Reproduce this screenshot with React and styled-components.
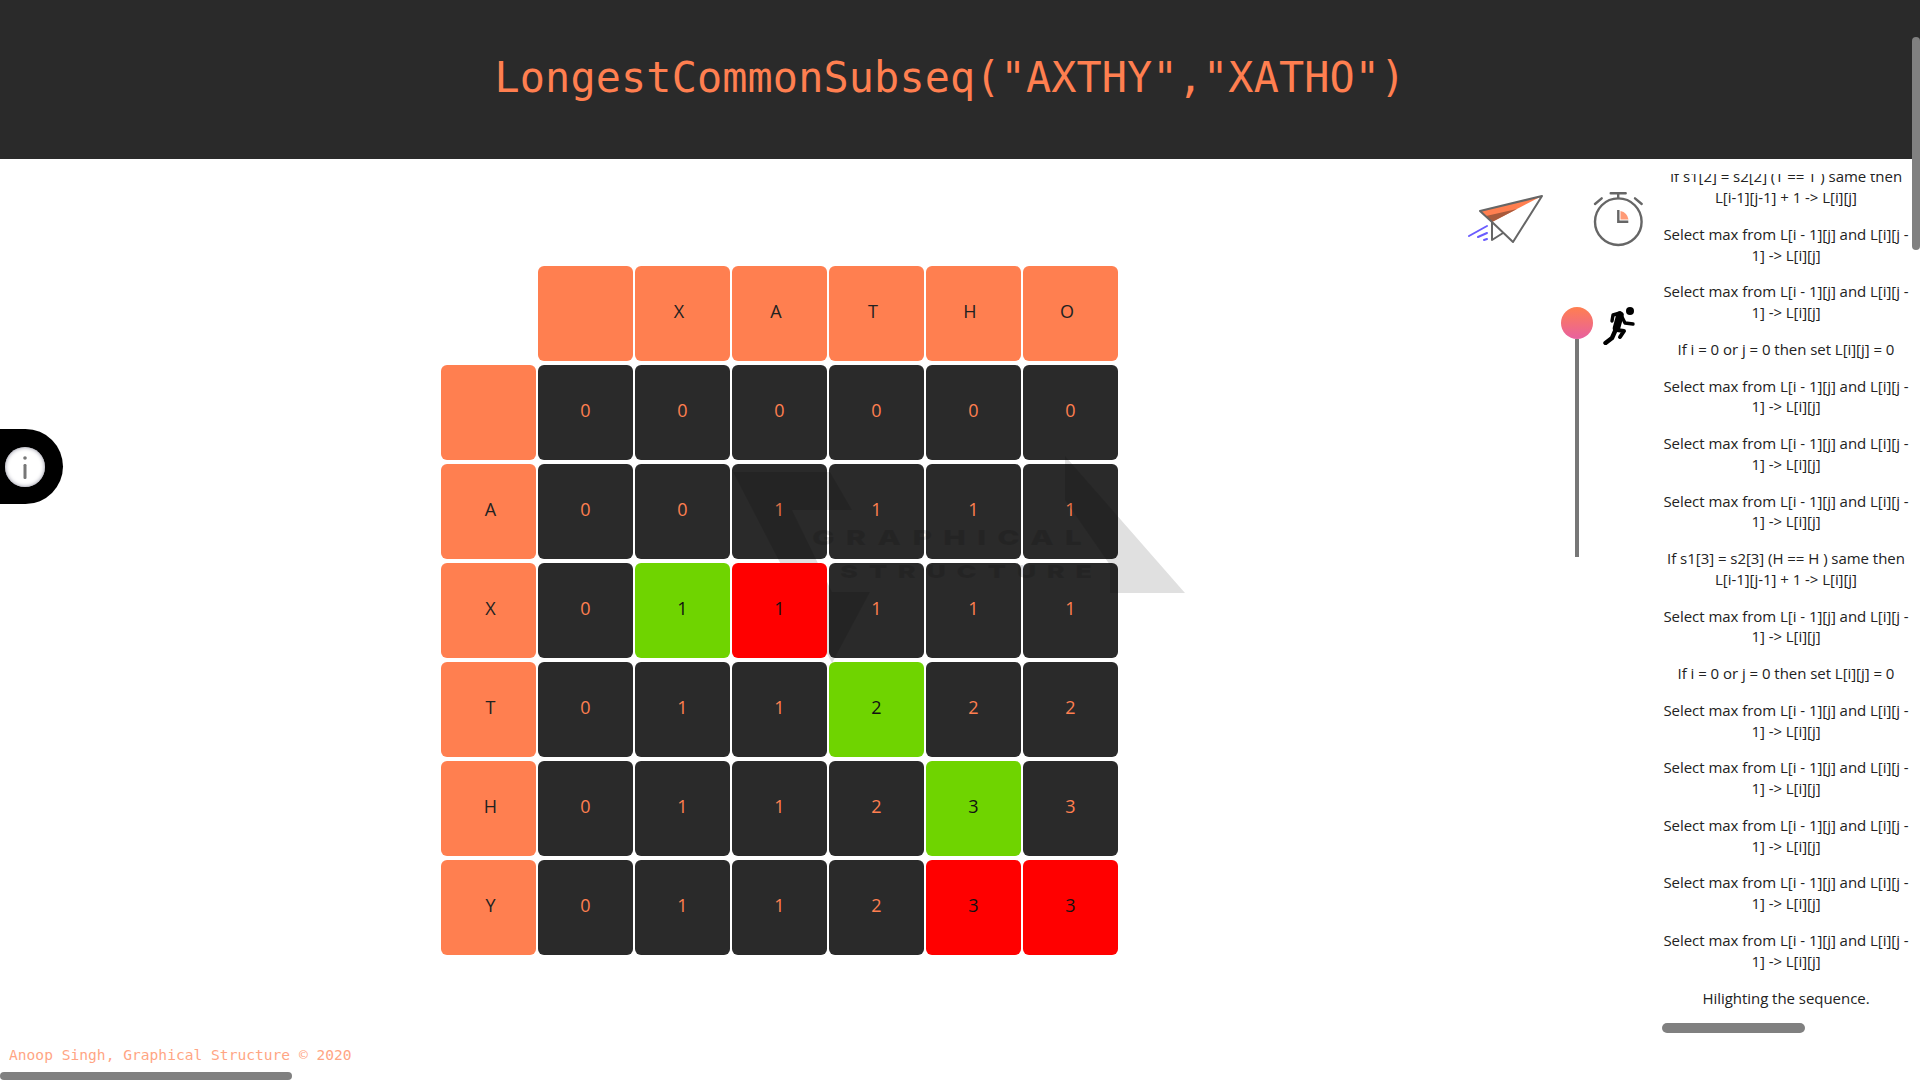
import React from 'react'
import styled, { createGlobalStyle } from 'styled-components'

const CORAL = '#ff7f50'
const DARK = '#2a2a2a'

const GlobalStyle = createGlobalStyle`
  html, body { margin: 0; padding: 0; background: #fff; overflow: hidden; }
  body { font-family: "Open Sans", "Liberation Sans", sans-serif; }
`

const columns = ['', 'X', 'A', 'T', 'H', 'O']
const rows = [
  { label: '', cells: ['0', '0', '0', '0', '0', '0'] },
  { label: 'A', cells: ['0', '0', '1', '1', '1', '1'] },
  { label: 'X', cells: ['0', '1g', '1r', '1', '1', '1'] },
  { label: 'T', cells: ['0', '1', '1', '2g', '2', '2'] },
  { label: 'H', cells: ['0', '1', '1', '2', '3g', '3'] },
  { label: 'Y', cells: ['0', '1', '1', '2', '3r', '3r'] },
]

const MAX = 'Select max from L[i - 1][j] and L[i][j - 1] -> L[i][j]'
const ZERO = 'If i = 0 or j = 0 then set L[i][j] = 0'
const log = [
  'If s1[2] = s2[2] (T == T ) same then L[i-1][j-1] + 1 -> L[i][j]',
  MAX, MAX, ZERO, MAX, MAX, MAX,
  'If s1[3] = s2[3] (H == H ) same then L[i-1][j-1] + 1 -> L[i][j]',
  MAX, ZERO, MAX, MAX, MAX, MAX, MAX,
  'Hilighting the sequence.',
]

function PlaneIcon() {
  return (
    <svg width="82" height="58" viewBox="0 0 82 58" fill="none">
      <polygon points="15,21 77,6 27,32" fill={CORAL} />
      <polygon points="21,26 27,32 52,19" fill="#a85a3c" />
      <path d="M77 6 L15 21 L27 32 L48 52 Z" stroke="#666" strokeWidth="2" strokeLinejoin="round" />
      <path d="M27 32 L27 50 L38 43" stroke="#666" strokeWidth="2" strokeLinejoin="round" />
      <path d="M4 46 L22 36 M13 47 L22 43 M19 50 L22 49" stroke="#6a5cff" strokeWidth="2" strokeLinecap="round" />
    </svg>
  )
}

function WatchIcon() {
  return (
    <svg width="56" height="60" viewBox="0 0 56 60" fill="none">
      <path d="M30.5 21 A10.5 10.5 0 0 1 38.5 29.5 L30.5 29.5 Z" fill="#ff9a76" />
      <circle cx="28.3" cy="31.7" r="23.3" stroke="#666" strokeWidth="2.4" />
      <path d="M20.7 3.3 H35.7 M28.2 3.3 V8" stroke="#666" strokeWidth="2.4" strokeLinecap="round" />
      <path d="M5 14 L11.7 8.3 M45 8.3 L51.7 14" stroke="#666" strokeWidth="2.4" strokeLinecap="round" />
      <path d="M28.3 20 V31.7 H38.3" stroke="#666" strokeWidth="2.4" />
    </svg>
  )
}

function RunnerIcon() {
  return (
    <svg width="33" height="38" viewBox="0 0 33 38" fill="none" stroke="#000" strokeLinecap="round" strokeLinejoin="round">
      <circle cx="27" cy="4" r="4" fill="#000" stroke="none" />
      <path d="M17 8 L13.5 21" strokeWidth="7.5" />
      <path d="M17 6 L10 8 L9 14" strokeWidth="3.4" />
      <path d="M19 10 L22 16 L30 17" strokeWidth="3.4" />
      <path d="M13 22 L9 31 L2.5 36" strokeWidth="4.4" />
      <path d="M14 23 L21 24 L17 30" strokeWidth="4" />
    </svg>
  )
}

function InfoIcon() {
  return (
    <svg width="10" height="26" viewBox="0 0 10 26">
      <circle cx="5" cy="4" r="1.8" fill="#777" />
      <rect x="3.5" y="10" width="3" height="15" rx="1.2" fill="#777" />
    </svg>
  )
}

// logo sits over the table, coloured cells stay above it
function WatermarkLogo() {
  return (
    <WatermarkSvg width="470" height="220" viewBox="0 0 470 220">
      <g fill="rgba(0,0,0,0.12)">
        <polygon points="13,22 110,22 132,60 72,60 112,142 150,142 112,213" />
        <polygon points="345,6 465,143 390,143 390,115 345,50" />
        <text transform="translate(92,95) scale(1.5,1)" fontFamily="Inter, sans-serif" fontWeight="900" fontSize="20" textLength="180">GRAPHICAL</text>
        <text transform="translate(120,128) scale(1.5,1)" fontFamily="Inter, sans-serif" fontWeight="900" fontSize="18" textLength="168">STRUCTURE</text>
      </g>
    </WatermarkSvg>
  )
}

export default function App() {
  return (
    <Page>
      <GlobalStyle />
      <Header>
        <Title>LongestCommonSubseq("AXTHY","XATHO")</Title>
      </Header>
      <Body>
        <Stage>
          <Table>
            <Corner />
            {columns.map((c, i) => (
              <HeadCell key={i}>{c}</HeadCell>
            ))}
            {rows.map((r) => (
              <React.Fragment key={r.label}>
                <SideCell>{r.label}</SideCell>
                {r.cells.map((v, i) => (
                  <Cell key={i} $mark={v[1]}>{v[0]}</Cell>
                ))}
              </React.Fragment>
            ))}
            <WatermarkLogo />
          </Table>
          <Footer>Anoop Singh, Graphical Structure © 2020</Footer>
        </Stage>
        <Tools>
          <IconRow>
            <PlaneIcon />
            <WatchIcon />
          </IconRow>
          <SpeedRow>
            <Slider>
              <Knob />
              <Track />
            </Slider>
            <RunnerIcon />
          </SpeedRow>
        </Tools>
        <Log>
          <LogList>
            {log.map((line, i) => (
              <LogLine key={i}>{line}</LogLine>
            ))}
          </LogList>
          <LogThumb />
        </Log>
      </Body>
      <InfoTab>
        <InfoDisc>
          <InfoIcon />
        </InfoDisc>
      </InfoTab>
      <PageThumbY />
      <PageThumbX />
    </Page>
  )
}

const Page = styled.div`
  position: relative;
  width: 1920px;
  height: 1080px;
  overflow: hidden;
  display: flex;
  flex-direction: column;
`

const Header = styled.header`
  height: 159px;
  flex: none;
  background: ${DARK};
  display: flex;
  align-items: center;
  justify-content: center;
  padding: 0 20px 5px 0;
  box-sizing: border-box;
`

const Title = styled.h1`
  margin: 0;
  font-family: "DejaVu Sans Mono", monospace;
  font-size: 41.8px;
  letter-spacing: 0.14px;
  font-weight: 400;
  color: ${CORAL};
`

const Body = styled.main`
  flex: 1;
  min-height: 0;
  display: flex;
`

const Stage = styled.section`
  flex: 1;
  display: flex;
  flex-direction: column;
  justify-content: space-between;
  padding: 107px 0 16px 0;
`

const Table = styled.div`
  position: relative;
  margin-left: 441px;
  width: 677px;
  display: grid;
  grid-template-columns: repeat(7, 95px);
  grid-auto-rows: 95px;
  column-gap: 2px;
  row-gap: 4px;
`

const Corner = styled.div``

const BaseCell = styled.div`
  display: flex;
  align-items: center;
  justify-content: center;
  box-sizing: border-box;
  border-radius: 6px;
  padding-bottom: 5px;
  font-size: 18px;
  color: ${CORAL};
  background: ${DARK};
`

const HeadCell = styled(BaseCell)`
  background: ${CORAL};
  color: #222;
  padding-right: 7px;
`

const SideCell = styled(BaseCell)`
  background: ${CORAL};
  color: #222;
  padding-left: 4px;
`

const markColors = { g: '#6fd400', r: '#ff0000' }

const Cell = styled(BaseCell)`
  ${(p) => p.$mark && `
    position: relative;
    z-index: 2;
    background: ${markColors[p.$mark]};
    color: #111;
  `}
`

const WatermarkSvg = styled.svg`
  position: absolute;
  left: 279px;
  top: 184px;
  z-index: 1;
  pointer-events: none;
`

const Footer = styled.footer`
  padding-left: 9px;
  font-family: "DejaVu Sans Mono", monospace;
  font-size: 14.6px;
  line-height: 19px;
  color: ${CORAL};
  opacity: 0.7;
`

const Tools = styled.aside`
  flex: none;
  width: 195px;
  display: flex;
  flex-direction: column;
`

const IconRow = styled.div`
  display: flex;
  gap: 43px;
  padding-top: 31px;
`

const SpeedRow = styled.div`
  display: flex;
  align-items: flex-start;
  gap: 10px;
  margin: 57px 0 0 96px;
`

const Slider = styled.div`
  display: flex;
  flex-direction: column;
  align-items: center;
  width: 32px;
`

const Knob = styled.div`
  width: 32px;
  height: 32px;
  border-radius: 50%;
  background: linear-gradient(#ff7f50, #e860a0);
`

const Track = styled.div`
  width: 4px;
  height: 218px;
  background: #777;
`

const Log = styled.aside`
  flex: none;
  width: 252px;
  margin-right: 8px;
  display: flex;
  flex-direction: column;
  padding: 15px 0 47px;
`

const LogList = styled.div`
  flex: 1;
  min-height: 0;
  overflow: hidden;
  display: flex;
  flex-direction: column;
  justify-content: flex-end;
  gap: 16px;
  padding-bottom: 14px;
`

const LogLine = styled.p`
  margin: 0;
  flex: none;
  text-align: center;
  font-size: 15px;
  letter-spacing: -0.04px;
  line-height: 20.75px;
  color: #222;

  &:last-child {
    margin-top: 1px;
  }
`

const LogThumb = styled.div`
  flex: none;
  width: 143px;
  height: 10px;
  margin-left: 2px;
  border-radius: 5px;
  background: #808080;
`

const InfoTab = styled.div`
  position: absolute;
  left: 0;
  top: 429px;
  width: 63px;
  height: 75px;
  border-radius: 0 38px 38px 0;
  background: #000;
  display: flex;
  align-items: center;
  padding-left: 5px;
  box-sizing: border-box;
`

const InfoDisc = styled.div`
  width: 40px;
  height: 40px;
  border-radius: 50%;
  background: #fff;
  box-shadow: inset 0 0 4px #889;
  display: flex;
  align-items: center;
  justify-content: center;
`

const PageThumbY = styled.div`
  position: absolute;
  right: 0;
  top: 37px;
  width: 8px;
  height: 213px;
  border-radius: 4px;
  background: #808080;
`

const PageThumbX = styled.div`
  position: absolute;
  left: 0;
  bottom: 0;
  width: 292px;
  height: 8px;
  border-radius: 4px;
  background: #808080;
`
